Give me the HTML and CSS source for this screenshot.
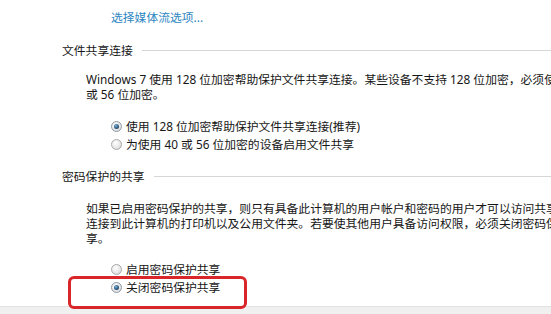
FILE: index.html
```html
<!DOCTYPE html>
<html lang="zh-CN">
<head>
<meta charset="utf-8">
<title>高级共享设置</title>
<link rel="stylesheet" href="styles.css">
</head>
<body>
<div class="page">
  <a class="link" href="#">选择媒体流选项...</a>

  <div class="section-head first">
    <span class="section-title">文件共享连接</span>
    <span class="rule"></span>
  </div>
  <div class="para p1">
    <div class="line">Windows 7 使用 128 位加密帮助保护文件共享连接。某些设备不支持 128 位加密，必须使用 40</div>
    <div class="line">或 56 位加密。</div>
  </div>
  <div class="radios r1">
    <label class="radio-row"><span class="radio checked"></span><span>使用 128 位加密帮助保护文件共享连接(推荐)</span></label>
    <label class="radio-row"><span class="radio"></span><span>为使用 40 或 56 位加密的设备启用文件共享</span></label>
  </div>

  <div class="section-head second">
    <span class="section-title">密码保护的共享</span>
    <span class="rule"></span>
  </div>
  <div class="para p2">
    <div class="line">如果已启用密码保护的共享，则只有具备此计算机的用户帐户和密码的用户才可以访问共享文件、</div>
    <div class="line">连接到此计算机的打印机以及公用文件夹。若要使其他用户具备访问权限，必须关闭密码保护共</div>
    <div class="line">享。</div>
  </div>
  <div class="radios r2">
    <label class="radio-row"><span class="radio"></span><span>启用密码保护共享</span></label>
    <label class="radio-row"><span class="radio checked"></span><span>关闭密码保护共享</span></label>
  </div>

  <div class="footer"></div>
  <div class="highlight"></div>
</div>
</body>
</html>
```

FILE: styles.css
```css
html, body {
  margin: 0;
  padding: 0;
  background: #ffffff;
}
body {
  width: 551px;
  height: 314px;
  overflow: hidden;
}
.page {
  position: relative;
  width: 551px;
  height: 314px;
  overflow: hidden;
  font-family: "Noto Sans", "Noto Sans CJK SC", sans-serif;
  font-size: 11.8px;
  line-height: 15px;
  color: #161616;
  display: flex;
  flex-direction: column;
}
.link {
  display: block;
  margin: 10px 0 0 111px;
  color: #2e86c1;
  text-decoration: none;
  white-space: nowrap;
}
.section-head {
  display: flex;
  align-items: center;
  margin-left: 62px;
  height: 15px;
}
.section-head.first { margin-top: 18px; }
.section-head.second { margin-top: 16px; }
.section-title {
  white-space: nowrap;
}
.rule {
  flex: 1;
  height: 1px;
  background: #d6d6d6;
  margin-left: 9px;
}
.para {
  margin-left: 86px;
}
.para .line {
  white-space: nowrap;
  height: 15px;
}
.p1 { margin-top: 14px; }
.p2 { margin-top: 17px; }
.radios {
  margin-left: 111px;
  display: flex;
  flex-direction: column;
}
.r1 { margin-top: 15px; }
.r2 { margin-top: 14px; }
.radio-row {
  display: flex;
  align-items: center;
  gap: 4px;
  height: 18px;
  white-space: nowrap;
}
.radio {
  position: relative;
  box-sizing: border-box;
  width: 11px;
  height: 11px;
  border-radius: 50%;
  border: 1px solid #a9a9a9;
  background: radial-gradient(circle at 40% 35%, #ffffff 0%, #e6e6e6 60%, #cfcfcf 100%);
  flex: none;
}
.radio.checked {
  border-color: #8c9aa6;
}
.radio.checked::after {
  content: "";
  position: absolute;
  left: 2px;
  top: 2px;
  width: 5px;
  height: 5px;
  border-radius: 50%;
  background: radial-gradient(circle at 40% 35%, #7fb2d8 0%, #2c5a80 55%, #142a40 100%);
}
.footer {
  margin-top: 10px;
  flex: 1;
  background: #f0f0f0;
  border-top: 1px solid #e2e2e2;
}
.highlight {
  position: absolute;
  left: 68px;
  top: 276px;
  width: 179px;
  height: 33px;
  box-sizing: border-box;
  border: 3px solid #d9262b;
  border-radius: 6px;
}
```
